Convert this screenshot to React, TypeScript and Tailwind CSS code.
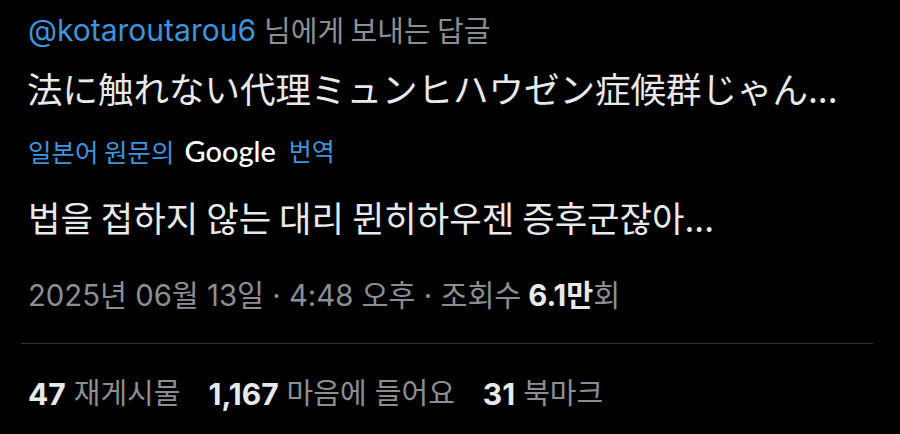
import React from "react";

const latin = { fontFamily: '"Inter", "Noto Sans CJK KR", sans-serif' };

export default function App() {
  return (
    <div className="w-[900px] h-[434px] overflow-hidden bg-black text-[#e7e9ea]">
      <div className="flex flex-col">
        <div className="h-[60px] flex items-center pl-[28px] whitespace-nowrap">
          <span className="text-[#3d95de] text-[30px] font-['Inter',sans-serif]">@kotaroutarou6</span>
          <span className="ml-[8px] text-[#8b8f94] text-[29px] font-['Noto_Sans_CJK_KR',sans-serif]">님에게 보내는 답글</span>
        </div>
        <div className="h-[56px] flex items-center pl-[27px] whitespace-nowrap text-[35.5px] font-['Noto_Sans_CJK_JP',sans-serif]">
          法に触れない代理ミュンヒハウゼン症候群じゃん...
        </div>
        <div className="h-[70px] flex items-center pl-[28px] whitespace-nowrap">
          <span className="text-[#3d95de] text-[25.5px] font-['Noto_Sans_CJK_KR',sans-serif]">일본어 원문의</span>
          <span className="ml-[10px] text-white text-[29px] font-medium font-['Lato',sans-serif]">Google</span>
          <span className="ml-[13px] text-[#3d95de] text-[25px] font-['Noto_Sans_CJK_KR',sans-serif]">번역</span>
        </div>
        <div className="h-[62px] flex items-center pl-[28px] whitespace-nowrap text-[35.3px] font-['Noto_Sans_CJK_KR',sans-serif]">
          법을 접하지 않는 대리 뮌히하우젠 증후군잖아...
        </div>
        <div className="h-[95px] flex items-center pl-[28px] whitespace-nowrap text-[29.3px] text-[#8b8f94]" style={latin}>
          <span>2025년 06월 13일 · 4:48 오후 · 조회수 </span>
          <span className="ml-[7px] font-bold text-[#e7e9ea]">6.1만</span>
          <span>회</span>
        </div>
        <div className="ml-[21px] w-[852px] h-px bg-[#2f3336]" />
        <div className="h-[100px] flex items-center pl-[28px] whitespace-nowrap text-[29px] text-[#8b8f94]" style={latin}>
          <span className="font-bold text-[#e7e9ea] text-[30px]">47</span>
          <span className="ml-[8px]">재게시물</span>
          <span className="ml-[28px] font-bold text-[#e7e9ea] text-[30px]">1,167</span>
          <span className="ml-[8px]">마음에 들어요</span>
          <span className="ml-[28px] font-bold text-[#e7e9ea] text-[30px]">31</span>
          <span className="ml-[8px]">북마크</span>
        </div>
      </div>
    </div>
  );
}
